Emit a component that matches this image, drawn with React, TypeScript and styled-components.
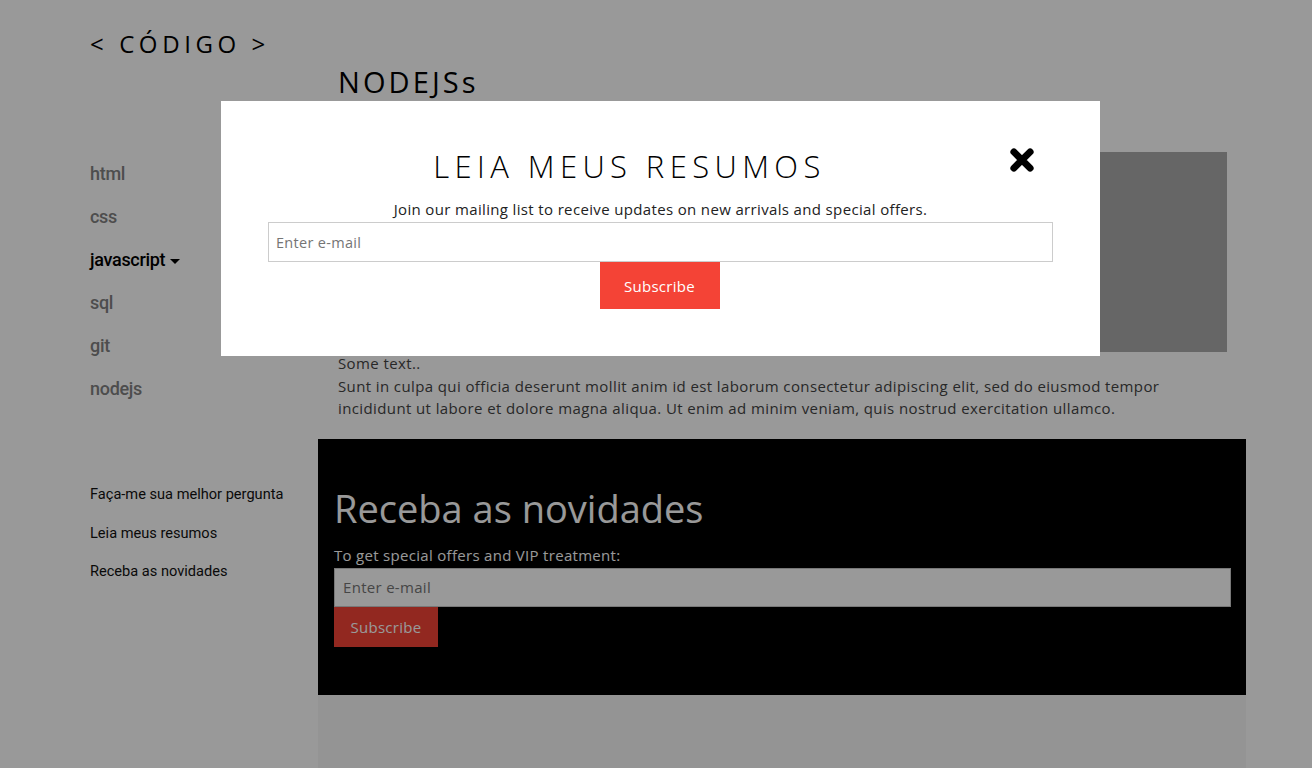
import React from "react";
import styled, { createGlobalStyle } from "styled-components";

const Global = createGlobalStyle`
  html, body { margin: 0; padding: 0; background: #ffffff; }
  body { font-family: "Open Sans", "DejaVu Sans", sans-serif; }
  * { box-sizing: border-box; }
`;

const Page = styled.div`
  display: grid;
  grid-template-columns: 318px 928px;
  min-height: 768px;
  background: #ffffff;
`;

const Sidebar = styled.aside`
  display: flex;
  flex-direction: column;
  padding: 30px 0 0 90px;
`;

const Logo = styled.div`
  font-family: "Open Sans", sans-serif;
  font-size: 24px;
  letter-spacing: 4.6px;
  color: #000;
  line-height: 28px;
  margin-bottom: 104px;
`;

const NavList = styled.nav`
  display: flex;
  flex-direction: column;
  gap: 19px;
`;

const NavItem = styled.a<{ $active?: boolean }>`
  font-family: Roboto, sans-serif;
  font-size: 18px;
  font-weight: 500;
  line-height: 24px;
  letter-spacing: -0.3px;
  color: ${(p) => (p.$active ? "#000000" : "#818181")};
  text-decoration: none;
  display: flex;
  align-items: center;
  gap: 5px;
`;

const Caret = styled.span`
  width: 0;
  height: 0;
  border-left: 5px solid transparent;
  border-right: 5px solid transparent;
  border-top: 5px solid #000;
  margin-top: 2px;
`;

const LinkList = styled.div`
  display: flex;
  flex-direction: column;
  gap: 20.5px;
  margin-top: 84px;
`;

const SideLink = styled.a`
  font-family: Roboto, sans-serif;
  font-size: 14.6px;
  line-height: 18px;
  color: #111;
  text-decoration: none;
`;

const Main = styled.main`
  display: flex;
  flex-direction: column;
  background: #f7f7f7;
`;

const Article = styled.section`
  background: #ffffff;
  padding: 64px 20px 19px 20px;
`;

const PageTitle = styled.h1`
  font-family: "Open Sans", sans-serif;
  font-weight: 400;
  font-size: 29px;
  line-height: 36px;
  letter-spacing: 3.1px;
  margin: 0 0 52px 0;
  color: #000;
`;

const ImageBox = styled.div`
  height: 200px;
  background: #aaaaaa;
  width: 889px;
`;

const BodyText = styled.p`
  font-family: "Open Sans", sans-serif;
  font-size: 15px;
  line-height: 22.5px;
  letter-spacing: 0.39px;
  color: #444;
  margin: 0;
  max-width: 870px;
`;

const Newsletter = styled.section`
  background: #000;
  padding: 46px 16px 48px 16px;
  display: flex;
  flex-direction: column;
`;

const NewsTitle = styled.h2`
  font-family: "Open Sans", sans-serif;
  font-weight: 400;
  font-size: 38px;
  line-height: 46px;
  margin: 0 0 14px 0;
  color: #fff;
`;

const NewsText = styled.div`
  font-family: "Open Sans", sans-serif;
  font-size: 15px;
  line-height: 20px;
  letter-spacing: 0.3px;
  color: #fff;
  margin-bottom: 3px;
`;

const NewsInput = styled.input`
  display: block;
  width: 897px;
  height: 39px;
  border: 1px solid #c8c8c8;
  background: #fff;
  padding: 0 8px;
  font-family: "Open Sans", sans-serif;
  font-size: 15px;
  letter-spacing: 0.3px;
  color: #333;
  outline: none;
  &::placeholder { color: #757575; }
`;

const NewsButton = styled.button`
  align-self: flex-start;
  width: 104px;
  height: 40px;
  background: #f44336;
  color: #fff;
  border: none;
  font-family: "Open Sans", sans-serif;
  font-size: 15px;
  letter-spacing: 0.3px;
`;

const Overlay = styled.div`
  position: fixed;
  inset: 0;
  background: rgba(0, 0, 0, 0.4);
  z-index: 10;
`;

const Modal = styled.div`
  position: fixed;
  left: 221px;
  top: 101px;
  width: 879px;
  height: 255px;
  background: #fff;
  z-index: 20;
  padding: 40px 47px 0 47px;
  display: flex;
  flex-direction: column;
`;

const ModalHeader = styled.div`
  display: flex;
  align-items: center;
  height: 50px;
`;

const ModalTitle = styled.h2`
  flex: 1;
  margin: 0;
  text-align: center;
  font-family: "Open Sans", sans-serif;
  font-weight: 300;
  font-size: 31px;
  letter-spacing: 5.4px;
  color: #000;
`;

const CloseBtn = styled.button`
  width: 62px;
  height: 40px;
  background: none;
  border: none;
  padding: 0;
  display: flex;
  align-items: center;
  justify-content: center;
  margin-top: -12px;
`;

const ModalText = styled.p`
  margin: 9px 0 4px 0;
  text-align: center;
  font-family: "Open Sans", sans-serif;
  font-size: 15px;
  line-height: 18px;
  letter-spacing: 0.35px;
  color: #222;
`;

const ModalInput = styled.input`
  display: block;
  width: 100%;
  height: 40px;
  border: 1px solid #ccc;
  padding: 0 7px;
  font-family: "Open Sans", sans-serif;
  font-size: 14.5px;
  letter-spacing: 0.3px;
  outline: none;
  &::placeholder { color: #757575; }
`;

const ModalButton = styled.button`
  align-self: center;
  width: 120px;
  height: 47px;
  margin-right: 2px;
  background: #f44336;
  color: #fff;
  border: none;
  font-family: "Open Sans", sans-serif;
  font-size: 15px;
  letter-spacing: 0.3px;
`;

const XIcon = () => (
  <svg width="26" height="26" viewBox="0 0 24 24">
    <path d="M4.5 4.5 L19.5 19.5 M19.5 4.5 L4.5 19.5" stroke="#000" strokeWidth="6.4" strokeLinecap="round" />
  </svg>
);

export default function App() {
  return (
    <>
      <Global />
      <Page>
        <Sidebar>
          <Logo>&lt; CÓDIGO &gt;</Logo>
          <NavList>
            <NavItem>html</NavItem>
            <NavItem>css</NavItem>
            <NavItem $active>
              javascript <Caret />
            </NavItem>
            <NavItem>sql</NavItem>
            <NavItem>git</NavItem>
            <NavItem>nodejs</NavItem>
          </NavList>
          <LinkList>
            <SideLink>Faça-me sua melhor pergunta</SideLink>
            <SideLink>Leia meus resumos</SideLink>
            <SideLink>Receba as novidades</SideLink>
          </LinkList>
        </Sidebar>
        <Main>
          <Article>
            <PageTitle>NODEJSs</PageTitle>
            <ImageBox />
            <BodyText>
              Some text..
              <br />
              Sunt in culpa qui officia deserunt mollit anim id est laborum consectetur adipiscing elit, sed do eiusmod tempor
              incididunt ut labore et dolore magna aliqua. Ut enim ad minim veniam, quis nostrud exercitation ullamco.
            </BodyText>
          </Article>
          <Newsletter>
            <NewsTitle>Receba as novidades</NewsTitle>
            <NewsText>To get special offers and VIP treatment:</NewsText>
            <NewsInput placeholder="Enter e-mail" />
            <NewsButton>Subscribe</NewsButton>
          </Newsletter>
        </Main>
      </Page>
      <Overlay />
      <Modal>
        <ModalHeader>
          <ModalTitle>LEIA MEUS RESUMOS</ModalTitle>
          <CloseBtn aria-label="close">
            <XIcon />
          </CloseBtn>
        </ModalHeader>
        <ModalText>Join our mailing list to receive updates on new arrivals and special offers.</ModalText>
        <ModalInput placeholder="Enter e-mail" />
        <ModalButton>Subscribe</ModalButton>
      </Modal>
    </>
  );
}
